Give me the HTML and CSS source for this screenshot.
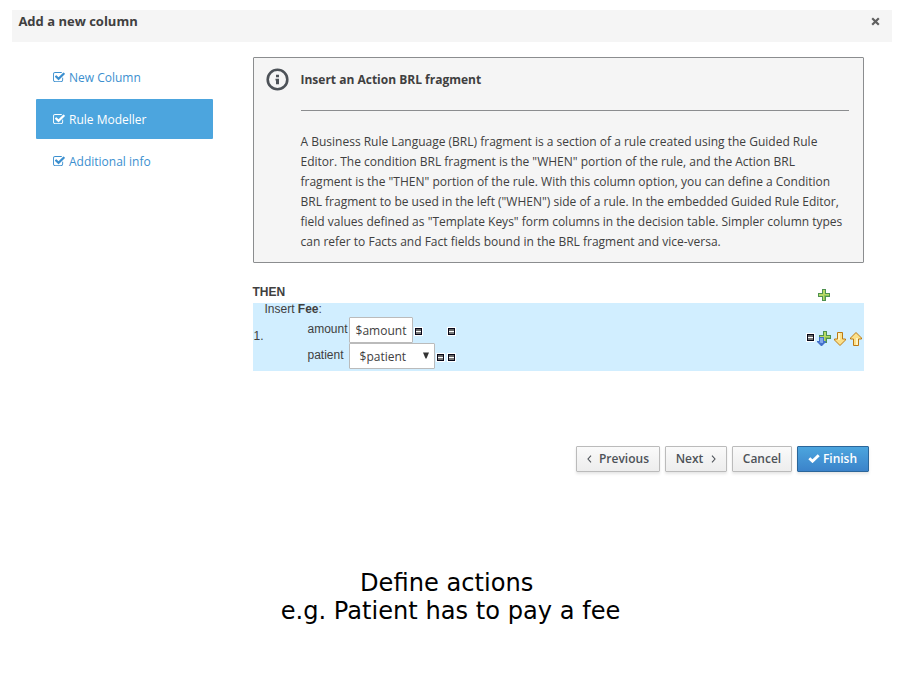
FILE: index.html
```html
<!DOCTYPE html>
<html lang="en">
<head>
<meta charset="utf-8">
<title>Add a new column</title>
<link rel="stylesheet" href="styles.css">
</head>
<body>
<svg class="defs" width="0" height="0" aria-hidden="true">
  <symbol id="check-square" viewBox="0 0 1664 1536">
    <path fill="currentColor" d="M1408 802v318q0 119-84.500 203.500t-203.500 84.500h-832q-119 0-203.500-84.500t-84.500-203.500v-832q0-119 84.500-203.500t203.500-84.500h832q63 0 117 25 15 7 18 23 3 17-9 29l-49 49q-10 10-23 10-3 0-9-2-23-6-45-6h-832q-66 0-113 47t-47 113v832q0 66 47 113t113 47h832q66 0 113-47t47-113v-254q0-13 9-22l64-64q10-10 23-10 6 0 12 3 20 8 20 29zm231-489l-814 814q-24 24-57 24t-57-24l-430-430q-24-24-24-57t24-57l110-110q24-24 57-24t57 24l263 263 647-647q24-24 57-24t57 24l110 110q24 24 24 57t-24 57z"/>
  </symbol>
  <symbol id="minus" viewBox="0 0 9 9">
    <path fill="#fff" d="M0 0h9v9H0z"/><path fill="#08081a" d="M1 1h7v7H1z"/>
    <path fill="#666" d="M2 2h5v2H2z"/><path fill="#fff" d="M2 4h5v1H2z"/><path fill="#777" d="M2 5h5v2H2z"/>
  </symbol>
  <symbol id="plus" viewBox="0 0 12 12">
    <path fill="#4f9150" d="M4 0h4v4h4v4H8v4H4V8H0V4h4z"/>
    <path fill="#b7d965" d="M5 1h2v4h4v2H7v4H5V7H1V5h4z"/>
    <path fill="#8cc257" d="M6 6h5v1H7v4H6z"/>
  </symbol>
  <symbol id="arrow" viewBox="0 0 12 14">
    <path fill="#fbe08a" stroke="#bd7a12" d="M3.500 .5h5v6.500h3v1L6 13.500.5 8V7h3z"/>
    <path fill="#fff4c4" d="M4 1h2v7H4z"/>
  </symbol>
</svg>
<div class="modal">
  <header class="modal-header"><h1>Add a new column</h1><button class="close" aria-label="Close"><svg width="9" height="9" viewBox="0 0 9 9"><path d="M1.200 1.200l6.600 6.600M7.800 1.200l-6.600 6.600" stroke="#606060" stroke-width="2.200"/></svg></button></header>
  <div class="modal-body">
    <nav class="steps">
      <a class="step"><svg class="check"><use href="#check-square"/></svg>New Column</a>
      <a class="step active"><svg class="check"><use href="#check-square"/></svg>Rule Modeller</a>
      <a class="step"><svg class="check"><use href="#check-square"/></svg>Additional info</a>
    </nav>
    <main class="content">
      <section class="info">
        <svg class="info-icon" width="23" height="23" viewBox="0 0 23 23"><circle cx="11.500" cy="11.500" r="9.800" fill="none" stroke="#4d5258" stroke-width="2.600"/><path fill="#4d5258" d="M10 6.800h3v2.500h-3zM9.500 10.800H13v5.400h-3v-3.600h-.5z"/></svg>
        <div class="info-text">
          <h2>Insert an Action BRL fragment</h2>
          <hr>
          <p>A Business Rule Language (BRL) fragment is a section of a rule created using the Guided Rule<br>Editor. The condition BRL fragment is the "WHEN" portion of the rule, and the Action BRL<br>fragment is the "THEN" portion of the rule. With this column option, you can define a Condition<br>BRL fragment to be used in the left ("WHEN") side of a rule. In the embedded Guided Rule Editor,<br>field values defined as "Template Keys" form columns in the decision table. Simpler column types<br>can refer to Facts and Fact fields bound in the BRL fragment and vice-versa.</p>
        </div>
      </section>
      <section class="rule">
        <div class="then"><b>THEN</b><svg class="add" width="12" height="12"><use href="#plus"/></svg></div>
        <div class="action">
          <span class="index">1.</span>
          <div class="fact">
            <div class="fact-title">Insert <b>Fee</b>:</div>
            <div class="field"><label>amount</label><span class="box input">$amount</span><svg class="minus first"><use href="#minus"/></svg><svg class="minus far"><use href="#minus"/></svg></div>
            <div class="field"><label>patient</label><span class="box select">$patient<svg width="6" height="7" viewBox="0 0 6 7"><path fill="#333" d="M0 .5h6L3.500 6.500h-1z"/></svg></span><svg class="minus first"><use href="#minus"/></svg><svg class="minus near"><use href="#minus"/></svg></div>
          </div>
          <div class="tools">
            <svg class="minus"><use href="#minus"/></svg>
            <svg class="add-below" width="14" height="15" viewBox="0 0 14 15"><use href="#plus" x="2" y="0" width="12" height="12"/><path fill="#4370cb" d="M2 6h5v4h2v1l-4 4h-1l-4-4v-1h2z"/><path fill="#82a8ec" d="M3 7h3v5H4l-2-1h1z"/></svg>
            <svg class="down" width="12" height="14"><use href="#arrow"/></svg>
            <svg class="up" width="12" height="14"><use href="#arrow"/></svg>
          </div>
        </div>
      </section>
    </main>
  </div>
  <footer class="buttons">
    <button class="btn prev"><svg width="5" height="8" viewBox="0 0 5 8"><path d="M4 .7L1 4l3 3.300" fill="none" stroke="#4d5258" stroke-width="1.100"/></svg>Previous</button>
    <button class="btn next">Next<svg width="5" height="8" viewBox="0 0 5 8"><path d="M1 .7L4 4 1 7.300" fill="none" stroke="#4d5258" stroke-width="1.100"/></svg></button>
    <button class="btn cancel">Cancel</button>
    <button class="btn finish"><svg width="12" height="9" viewBox="0 0 12 9"><path d="M1.300 4.300L4.500 7.200 10.700 1.300" fill="none" stroke="#fff" stroke-width="2.900"/></svg>Finish</button>
  </footer>
</div>
<div class="caption">Define actions 
e.g. Patient has to pay a fee</div>
</body>
</html>
```
FILE: styles.css
```css
* { box-sizing: border-box; }
body { margin: 0; background: #fff; color: #404040; font: 12px/20px "Open Sans", sans-serif; height: 675px; overflow: hidden; }
.defs { position: absolute; }
svg { display: block; flex: none; }
h1, h2, p { margin: 0; }
.modal { width: 880px; margin: 10px 0 0 12px; }
.modal-header { height: 32px; background: #f5f5f5; display: flex; justify-content: space-between; padding: 1px 12px 0 6.400px; }
h1 { font-size: 13px; line-height: 20px; font-weight: 700; }
.close { border: 0; padding: 0; background: none; height: 21px; }
.modal-body { display: flex; gap: 40px; padding: 15px 28px 0 24px; }
.steps { width: 177px; display: flex; flex-direction: column; gap: 2px; }
.step { height: 40px; display: flex; align-items: center; padding: 2px 0 0 16.500px; gap: 4.500px; color: #3b8fcf; border-radius: 1px; }
.step.active { background: #4ca5de; color: #fff; }
.check { width: 12px; height: 11px; margin-top: -1px; }
.content { width: 611px; }
.info { height: 206px; border: 1px solid #8b8d8f; border-radius: 1px; background: #f5f5f5; display: flex; padding: 10px 14px 0 12px; gap: 12px; }
.info-text { flex: 1; }
h2 { font-size: 12px; line-height: 20px; font-weight: 700; padding-top: 2px; margin-left: -.5px; }
hr { border: 0; border-top: 1px solid #8b8d8f; margin: 20px 0 21px; }
.info p { white-space: nowrap; margin-left: -.5px; }
.rule { font-family: "Liberation Sans", Arial, sans-serif; margin-top: 18px; }
.then { height: 22px; display: flex; justify-content: space-between; padding-right: 34px; }
.then b { line-height: 22px; margin-left: -.5px; }
.add { margin-top: 8px; }
.action { height: 68px; background: #d1eeff; display: flex; }
.index { width: 12px; padding: 23px 0 0 .5px; }
.fact { flex: 1; }
.fact-title { height: 14px; line-height: 12px; margin-left: -.5px; }
.field { height: 26px; display: flex; }
.field label { width: 84px; padding-left: 42.500px; line-height: 24px; }
.box { height: 26px; border: 1px solid #bbb; background: #fff; font: 12px/24px "Open Sans", sans-serif; border-radius: 1px; }
.input { width: 64px; padding: 1px 0 0 5.600px; }
.select { width: 86px; padding: 2px 5px 0 9.600px; display: flex; justify-content: space-between; align-items: center; }
.select svg { margin-bottom: 3px; }
.minus { width: 9px; height: 9px; }
.field .minus { margin-top: 10px; }
.minus.first { margin-left: 1px; }
.minus.far { margin-left: 24px; }
.minus.near { margin-left: 2px; }
.tools { display: flex; width: 58px; }
.tools .minus { margin-top: 30px; }
.add-below { margin: 28px 0 0 2px; }
.down { margin: 29px 0 0 3px; }
.up { margin: 29px 0 0 4px; transform: rotate(180deg); }
.buttons { display: flex; gap: 5px; padding: 75px 0 0 564px; }
.btn { height: 26px; display: flex; align-items: center; justify-content: center; font: 600 12px/20px "Open Sans", sans-serif; color: #4d5258; padding: 0; border: 1px solid #bbb; border-radius: 1px; background: linear-gradient(#fafafa, #ededed); box-shadow: 0 2px 3px rgba(3,3,3,.1); }
.prev { width: 84px; gap: 8px; }
.prev svg { margin-right: -1px; }
.next { width: 62px; gap: 8px; }
.cancel { width: 60px; }
.finish { width: 72px; gap: 3px; color: #fff; border-color: #2b669a; background: linear-gradient(#4ca5de, #3b83ca); }
.finish svg { margin: -1px 0 0 -1px; }
.caption { margin-top: 97px; padding-left: 1px; text-align: center; white-space: pre; font: 24.130px/28px "DejaVu Sans", sans-serif; color: #000; }
```
